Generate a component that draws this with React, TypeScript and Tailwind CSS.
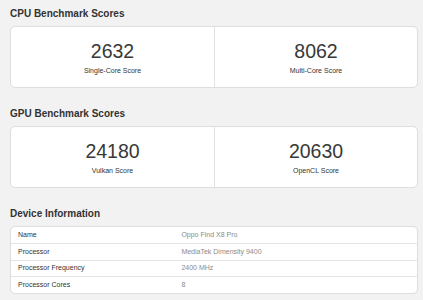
const cpu = [
  { score: '2632', label: 'Single-Core Score' },
  { score: '8062', label: 'Multi-Core Score' },
]

const gpu = [
  { score: '24180', label: 'Vulkan Score' },
  { score: '20630', label: 'OpenCL Score' },
]

const device = [
  { name: 'Name', value: 'Oppo Find X8 Pro' },
  { name: 'Processor', value: 'MediaTek Dimensity 9400' },
  { name: 'Processor Frequency', value: '2400 MHz' },
  { name: 'Processor Cores', value: '8' },
]

function Heading({ children }: { children: React.ReactNode }) {
  return (
    <h2 className="text-[10px] leading-[12px] font-bold text-[#333] mb-[6px]">
      {children}
    </h2>
  )
}

function ScoreCard({ items }: { items: { score: string; label: string }[] }) {
  return (
    <div className="grid grid-cols-2 bg-white border border-[#dedede] rounded-[5px]">
      {items.map((item, i) => (
        <div
          key={item.label}
          className={
            'flex flex-col items-center pt-[12px] pb-[11px] ' +
            (i > 0 ? 'border-l border-[#e2e2e2]' : '')
          }
        >
          <div className="text-[19.5px] leading-[24px] text-[#383838]">{item.score}</div>
          <div className="mt-[3px] text-[7px] leading-[10px] text-[#333]">{item.label}</div>
        </div>
      ))}
    </div>
  )
}

export default function App() {
  return (
    <div
      className="w-[423px] h-[300px] bg-[#f2f2f2] pl-[10px] pr-[5px] pt-[8px] overflow-hidden"
      style={{ fontFamily: '"Liberation Sans", Arial, sans-serif' }}
    >
      {/* CPU */}
      <section>
        <Heading>CPU Benchmark Scores</Heading>
        <ScoreCard items={cpu} />
      </section>

      {/* GPU */}
      <section className="mt-[20px]">
        <Heading>GPU Benchmark Scores</Heading>
        <ScoreCard items={gpu} />
      </section>

      {/* Device */}
      <section className="mt-[20px]">
        <Heading>Device Information</Heading>
        <div className="bg-white border border-[#dedede] rounded-[5px]">
          {device.map((row, i) => (
            <div
              key={row.name}
              className={
                'flex items-center text-[7px] ' +
                (i > 0 ? 'border-t border-[#e4e4e4] h-[16.5px]' : 'h-[16px]')
              }
            >
              <div className="w-[40%] pl-[7px] text-[#333]">{row.name}</div>
              <div className="pl-[8px] text-[#8a8a8a]">{row.value}</div>
            </div>
          ))}
        </div>
      </section>
    </div>
  )
}
